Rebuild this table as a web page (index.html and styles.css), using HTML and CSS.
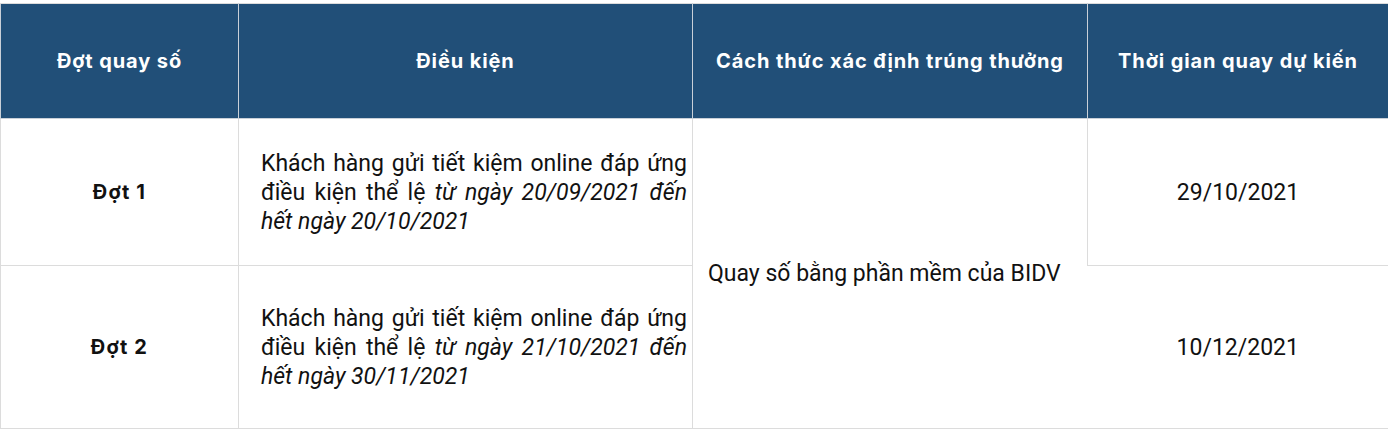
FILE: index.html
```html
<!DOCTYPE html>
<html lang="vi">
<head>
<meta charset="utf-8">
<link rel="stylesheet" href="styles.css">
</head>
<body>
<table class="prize-table">
  <colgroup>
    <col class="c1"><col class="c2"><col class="c3"><col class="c4">
  </colgroup>
  <thead>
    <tr>
      <th>Đợt quay số</th>
      <th>Điều kiện</th>
      <th>Cách thức xác định trúng thưởng</th>
      <th>Thời gian quay dự kiến</th>
    </tr>
  </thead>
  <tbody>
    <tr class="row1">
      <td class="round">Đợt 1</td>
      <td class="cond">Khách hàng gửi tiết kiệm online đáp ứng điều kiện thể lệ <em>từ ngày 20/09/2021 đến hết ngày 20/10/2021</em></td>
      <td class="method" rowspan="2">Quay số bằng phần mềm của BIDV</td>
      <td class="date date1">29/10/2021</td>
    </tr>
    <tr class="row2">
      <td class="round">Đợt 2</td>
      <td class="cond">Khách hàng gửi tiết kiệm online đáp ứng điều kiện thể lệ <em>từ ngày 21/10/2021 đến hết ngày 30/11/2021</em></td>
      <td class="date date2">10/12/2021</td>
    </tr>
  </tbody>
</table>
</body>
</html>
```
FILE: styles.css
```css
html, body {
  margin: 0;
  padding: 0;
  background: #fff;
}
body {
  padding-top: 3px;
}
.prize-table {
  width: 1388px;
  border-collapse: collapse;
  table-layout: fixed;
  font-family: Roboto, "Noto Sans", sans-serif;
  color: #111;
}
.c1 { width: 238px; }
.c2 { width: 454px; }
.c3 { width: 395px; }
.c4 { width: 301px; }

.prize-table th,
.prize-table td {
  border: 1px solid #dcdcdc;
  vertical-align: middle;
}
.prize-table th {
  background: #214f78;
  color: #fff;
  height: 114px;
  padding: 0 4px;
  font-family: Inter, "Open Sans", sans-serif;
  font-weight: 700;
  font-size: 20px;
  letter-spacing: 0.9px;
  text-align: center;
  border-color: #c9d0d8;
  border-top-color: #dcdcdc;
}
.row1 td { height: 144px; }
.row2 td { height: 160px; }

.round {
  text-align: center;
  font-family: Inter, "Open Sans", sans-serif;
  font-weight: 700;
  font-size: 20px;
  letter-spacing: 1.2px;
  color: #111;
}
.cond {
  text-align: justify;
  padding: 0 5px 0 22px;
  font-size: 23px;
  line-height: 29px;
}
.cond em {
  font-style: italic;
}
.method {
  padding: 0 15px 0 15px;
  font-size: 23px;
  text-align: left;
  border-right: none !important;
}
.date {
  text-align: center;
  font-size: 23px;
}
.date1 {
  border-left: 1px solid #dcdcdc;
}
.date2 {
  border-left: none !important;
}
```
